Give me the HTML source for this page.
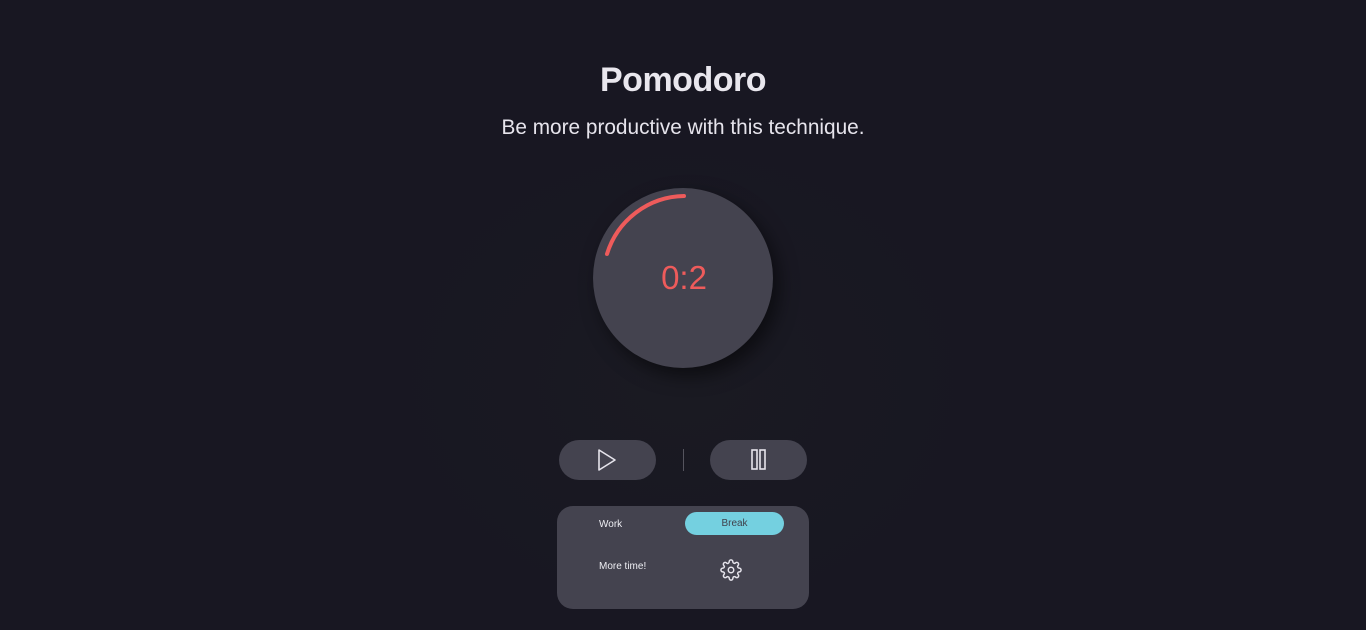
<!DOCTYPE html>
<html><head><style>
html,body{margin:0;padding:0;}
body{width:1366px;height:624px;background:#181722;font-family:"Liberation Sans",sans-serif;position:relative;overflow:hidden;}
.glow{position:absolute;left:383px;top:130px;width:600px;height:500px;border-radius:50%;background:radial-gradient(ellipse at center,#1a1a22 0%,#181722 70%);}
h1{position:absolute;top:61px;left:0;width:1366px;text-align:center;margin:0;font-size:34px;font-weight:bold;color:#e9e7ee;letter-spacing:-0.5px;}
.sub{position:absolute;top:116px;left:0;width:1366px;text-align:center;font-size:20.8px;color:#e6e4ec;}
.circle{position:absolute;left:593px;top:188px;width:180px;height:180px;border-radius:50%;background:#44434f;box-shadow:6px 8px 18px rgba(0,0,0,0.5);}
.time{position:absolute;left:593px;top:259px;width:182px;text-align:center;font-size:33px;color:#ee5b5b;}
.btn{position:absolute;top:440px;width:97px;height:40px;border-radius:20px;background:#44434f;}
.div{position:absolute;left:683px;top:449px;width:1px;height:22px;background:#55545e;}
.panel{position:absolute;left:557px;top:506px;width:252px;height:103px;border-radius:16px;background:#44434f;}
.lbl{position:absolute;font-size:10px;color:#eeeef3;}
.brk{position:absolute;left:685px;top:512px;width:99px;height:23px;border-radius:12px;background:#74d0e0;color:#3f3f4a;font-size:10px;text-align:center;line-height:24px;}
</style></head><body>
<div class="glow"></div>
<h1>Pomodoro</h1>
<div class="sub">Be more productive with this technique.</div>
<div class="circle"></div>
<svg style="position:absolute;left:593px;top:188px" width="180" height="180"><path d="M14 66 A82 82 0 0 1 91 8" fill="none" stroke="#ee5b5b" stroke-width="4" stroke-linecap="round"/></svg>
<div class="time">0:2</div>
<div class="btn" style="left:559px"><svg width="97" height="40"><path d="M40 10 L56 20 L40 30 Z" fill="none" stroke="#e6e4ec" stroke-width="1.6" stroke-linejoin="round"/></svg></div>
<div class="div"></div>
<div class="btn" style="left:710px"><svg width="97" height="40"><rect x="42" y="10" width="5" height="19" fill="none" stroke="#e6e4ec" stroke-width="1.6"/><rect x="50" y="10" width="5" height="19" fill="none" stroke="#e6e4ec" stroke-width="1.6"/></svg></div>
<div class="panel"></div>
<div class="lbl" style="left:599px;top:519px">Work</div>
<div class="brk">Break</div>
<div class="lbl" style="left:599px;top:561px">More time!</div>
<svg style="position:absolute;left:720px;top:559px" width="22" height="22" viewBox="0 0 24 24" fill="none" stroke="#e6e4ec" stroke-width="1.6"><circle cx="12" cy="12" r="3"/><path d="M19.4 15a1.65 1.65 0 0 0 .33 1.820l.06.06a2 2 0 1 1-2.83 2.83l-.06-.06a1.65 1.65 0 0 0-1.820-.33 1.65 1.65 0 0 0-1 1.51V21a2 2 0 1 1-4 0v-.09A1.65 1.65 0 0 0 9 19.4a1.65 1.65 0 0 0-1.820.33l-.06.06a2 2 0 1 1-2.83-2.83l.06-.06A1.65 1.65 0 0 0 4.68 15a1.65 1.65 0 0 0-1.51-1H3a2 2 0 1 1 0-4h.09A1.65 1.65 0 0 0 4.6 9a1.65 1.65 0 0 0-.33-1.820l-.06-.06a2 2 0 1 1 2.83-2.83l.06.06A1.65 1.65 0 0 0 9 4.68 1.65 1.65 0 0 0 10 3.17V3a2 2 0 1 1 4 0v.09a1.65 1.65 0 0 0 1 1.51 1.65 1.65 0 0 0 1.820-.33l.06-.06a2 2 0 1 1 2.83 2.83l-.06.06A1.65 1.65 0 0 0 19.4 9a1.65 1.65 0 0 0 1.51 1H21a2 2 0 1 1 0 4h-.09a1.65 1.65 0 0 0-1.51 1z"/></svg>
</body></html>
